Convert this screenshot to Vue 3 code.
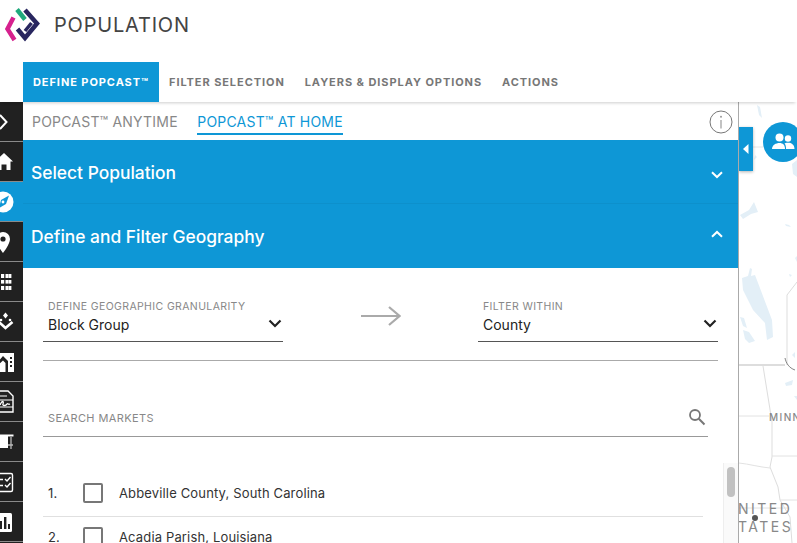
<template>
  <div class="page">
    <header class="top">
      <svg class="logo" viewBox="0 0 36 34" width="36" height="34">
        <polyline points="9.5,9.5 3.5,21 10.5,32" fill="none" stroke="#d6218e" stroke-width="4.5" />
        <polyline points="13,1.5 21,11.5" fill="none" stroke="#1fa97c" stroke-width="4.5" />
        <polyline points="21,2 33,15.5 21,30 13.5,21" fill="none" stroke="#28265f" stroke-width="4.5" />
        <polyline points="27.5,15 21,23" fill="none" stroke="#28265f" stroke-width="3.5" />
      </svg>
      <h1>POPULATION</h1>
    </header>

    <nav class="tabs">
      <a v-for="(tab, i) in tabs" :key="tab" class="tab" :class="{ active: i === 0 }">{{ tab }}</a>
    </nav>

    <div class="body">
      <aside class="rail">
        <div class="rail-item">
          <svg viewBox="0 0 23 40"><polyline points="0,13 6.5,20 0,27" fill="none" stroke="#fff" stroke-width="2" /></svg>
        </div>
        <div class="rail-item">
          <svg viewBox="0 0 23 40"><path d="M4 11 L13 19.5 L10.5 19.5 L10.5 28 L6.5 28 L6.5 22.5 L1.5 22.5 L1.5 28 L-3 28 L-3 19.5 L-5 19.5 Z" fill="#fff" /></svg>
        </div>
        <div class="rail-item active">
          <svg viewBox="0 0 23 40">
            <circle cx="3" cy="20" r="10.5" fill="#fff" />
            <path d="M9 13.5 L6 22 L-1 26 L1 18 Z" fill="#0e97d6" />
            <circle cx="3" cy="20" r="1.4" fill="#fff" />
          </svg>
        </div>
        <div class="rail-item">
          <svg viewBox="0 0 23 40">
            <path d="M3 10 a7 7 0 0 1 7 7 c0 5 -7 14 -7 14 s-7 -9 -7 -14 a7 7 0 0 1 7 -7z" fill="#fff" />
            <circle cx="3" cy="17" r="2.6" fill="#212121" />
          </svg>
        </div>
        <div class="rail-item">
          <svg viewBox="0 0 23 40" fill="#fff">
            <rect x="1" y="12" width="3.2" height="4" /><rect x="5.5" y="12" width="3.2" height="4" /><rect x="9" y="12" width="2.4" height="4" />
            <rect x="1" y="18" width="3.2" height="3.6" /><rect x="5.5" y="18" width="3.2" height="3.6" /><rect x="9" y="18" width="2.4" height="3.6" />
            <rect x="1" y="24" width="3.2" height="4" /><rect x="5.5" y="24" width="3.2" height="4" /><rect x="9" y="24" width="2.4" height="4" />
          </svg>
        </div>
        <div class="rail-item">
          <svg viewBox="0 0 23 40">
            <path d="M5.5 10.5 L8 13.5 L5.5 16.5 L3 13.5 Z" fill="#fff" />
            <circle cx="1" cy="18" r="1.3" fill="#fff" /><circle cx="10" cy="18" r="1.3" fill="#fff" />
            <polyline points="-1,20 5.5,26 12.5,20" fill="none" stroke="#fff" stroke-width="2.6" />
          </svg>
        </div>
        <div class="rail-item">
          <svg viewBox="0 0 23 40">
            <path d="M-2 11 L14 11 L14 30 L-2 30 Z" fill="#fff" />
            <path d="M-2 20 L3 14 L8 19 L8 30 L5.5 30 L5.5 21 L3 18.5 L-2 23 Z" fill="#212121" />
            <rect x="10" y="19" width="2" height="2" fill="#212121" /><rect x="10" y="23" width="2" height="2" fill="#212121" /><rect x="10" y="15" width="2" height="2" fill="#212121" />
          </svg>
        </div>
        <div class="rail-item">
          <svg viewBox="0 0 23 40">
            <path d="M-2 9 L8 9 L13 14 L13 30 L-2 30 Z" fill="none" stroke="#fff" stroke-width="1.4" />
            <path d="M0 14 L7 14 M-2 18 L13 18 M-2 25 L13 25" stroke="#fff" stroke-width="1.2" fill="none" />
            <path d="M0 23 C2 18 4 19 3 22 C2 24 6 24 7 22 C8 21 8 23 10 22" stroke="#fff" stroke-width="1.3" fill="none" />
          </svg>
        </div>
        <div class="rail-item">
          <svg viewBox="0 0 23 40">
            <rect x="-2" y="14" width="10" height="12" fill="#fff" />
            <path d="M-2 13.5 L13.5 13.5" stroke="#fff" stroke-width="2" />
            <path d="M11 15 L11 27 M8 23 L13 23" stroke="#bbb" stroke-width="1.3" fill="none" />
          </svg>
        </div>
        <div class="rail-item">
          <svg viewBox="0 0 23 40">
            <rect x="-3" y="11.5" width="15.5" height="18" rx="1.5" fill="none" stroke="#fff" stroke-width="1.4" />
            <path d="M0 17.5 L3 17.5 M0 23.5 L3 23.5" stroke="#fff" stroke-width="1.4" />
            <path d="M5 17 L7 19 L10.5 15 M5 23 L7 25 L10.5 21" stroke="#fff" stroke-width="1.4" fill="none" />
          </svg>
        </div>
        <div class="rail-item">
          <svg viewBox="0 0 23 40">
            <rect x="-4" y="11" width="16" height="19" rx="1.5" fill="#fff" />
            <rect x="4" y="15" width="2.4" height="12" fill="#212121" />
            <rect x="8" y="22" width="2" height="5" fill="#212121" />
            <rect x="0" y="19" width="2" height="8" fill="#212121" />
          </svg>
        </div>
      </aside>

      <main class="panel">
        <div class="subtabs">
          <a class="subtab">POPCAST™ ANYTIME</a>
          <a class="subtab current">POPCAST™ AT HOME</a>
          <svg class="info" viewBox="0 0 24 24" width="24" height="24">
            <circle cx="12" cy="12" r="11" fill="none" stroke="#777" stroke-width="1" />
            <circle cx="12" cy="6.8" r="1" fill="#999" />
            <path d="M12 10 L12 18.5" stroke="#999" stroke-width="1.2" />
          </svg>
        </div>

        <section class="acc">
          <span>Select Population</span>
          <svg class="acc-chev down" viewBox="0 0 12 8" width="12" height="8"><polyline points="1,1.2 6,6 11,1.2" fill="none" stroke="#fff" stroke-width="2" /></svg>
        </section>
        <section class="acc second">
          <span>Define and Filter Geography</span>
          <svg class="acc-chev up" viewBox="0 0 12 8" width="12" height="8"><polyline points="1,6.8 6,2 11,6.8" fill="none" stroke="#fff" stroke-width="2" /></svg>
        </section>

        <div class="selects">
          <div class="select">
            <label>DEFINE GEOGRAPHIC GRANULARITY</label>
            <div class="value">Block Group</div>
            <svg class="sel-chev" viewBox="0 0 14 9" width="14" height="9"><polyline points="1.5,1.5 7,7 12.5,1.5" fill="none" stroke="#222" stroke-width="2.2" /></svg>
          </div>
          <svg class="arrow" viewBox="0 0 40 24" width="40" height="24">
            <path d="M0 12 L38 12 M28 3 L38.5 12 L28 21" fill="none" stroke="#aaa" stroke-width="2.2" />
          </svg>
          <div class="select">
            <label>FILTER WITHIN</label>
            <div class="value">County</div>
            <svg class="sel-chev" viewBox="0 0 14 9" width="14" height="9"><polyline points="1.5,1.5 7,7 12.5,1.5" fill="none" stroke="#222" stroke-width="2.2" /></svg>
          </div>
        </div>

        <div class="search">
          <span>SEARCH MARKETS</span>
          <svg viewBox="0 0 18 18" width="18" height="18">
            <circle cx="7" cy="7" r="5" fill="none" stroke="#777" stroke-width="1.8" />
            <path d="M10.8 10.8 L16.5 16.5" stroke="#777" stroke-width="2" />
          </svg>
        </div>

        <ol class="markets">
          <li v-for="(m, i) in markets" :key="m">
            <span class="num">{{ i + 1 }}.</span>
            <span class="box"></span>
            <span class="name">{{ m }}</span>
          </li>
        </ol>

        <div class="scroll"><div class="thumb"></div></div>
      </main>

      <div class="map">
        <svg class="map-art" viewBox="0 0 58 441" width="58" height="441">
          <path d="M14 45 L24 45" stroke="#e6e6e6" stroke-width="1" fill="none" />
          <path d="M0 263 L46 263" stroke="#ddd" stroke-width="2" fill="none" />
          <path d="M48 193 L48 263 M48 193 L58 180" stroke="#ddd" stroke-width="1" fill="none" />
          <path d="M46 256 C47 261 50 266 56 268" stroke="#666" stroke-width="0.8" fill="none" />
          <path d="M24 264 L29 295 L33 320 L33 355 L31 365 L39 385 L41 398 L51 415 L53 441" stroke="#ddd" stroke-width="1" fill="none" />
          <path d="M0 314 L30 314 M33 354 L58 354 M0 361 C10 362 20 365 31 366 M41 398 L58 398 M0 406 L50 406" stroke="#e2e2e2" stroke-width="1" fill="none" />
          <g fill="#e3eff7">
            <path d="M3 176 L9 174 L11 166 L13 167 L12 174 L16 173 L33 218 L34 235 L28 238 L26 221 L14 208 L4 188Z" />
            <path d="M1 215 L5 216 L8 226 L4 224Z" />
            <path d="M4 228 L10 230 L16 239 L10 241 L6 237Z" />
            <path d="M18 3 L21 5 L23 16 L20 13Z" />
            <path d="M53 62 L58 58 L58 75 L54 72Z" />
            <path d="M16 53 L18 55 L15 58Z" />
            <path d="M1 113 L10 108 L15 100 L19 110 L12 112 L4 117Z" />
            <path d="M46 122 L50 123 L52 125 L47 124Z" />
            <path d="M56 156 L58 154 L58 160Z" />
            <path d="M50 172 L53 173 L51 175Z" />
            <path d="M53 253 L56 250 L56 256Z" />
            <path d="M46 281 L54 278 L53 283 L47 284Z" />
            <path d="M55 294 L58 294 L58 298Z" />
          </g>
        </svg>
        <span class="label minn">MINN</span>
        <span class="label united">NITED</span>
        <span class="label states">TATES</span>
        <i class="city"></i>
        <button class="collapse">
          <svg viewBox="0 0 6 10" width="6" height="10"><path d="M5.5 0 L0 5 L5.5 10 Z" fill="#fff" /></svg>
        </button>
        <button class="people">
          <svg viewBox="0 0 24 24" width="24" height="24" fill="#fff">
            <circle cx="8.5" cy="7.5" r="4" />
            <circle cx="17" cy="8.5" r="3.2" />
            <path d="M1 19 C1 15 5 13 8.5 13 C12 13 14 15 14 19 Z" />
            <path d="M15 19 C15 16 14.5 14.5 13.5 13.5 C15 12.8 16.5 12.8 17.5 12.8 C20 12.8 23.5 14.5 23.5 19 Z" />
          </svg>
        </button>
      </div>
    </div>
  </div>
</template>

<script setup>
const tabs = ['DEFINE POPCAST™', 'FILTER SELECTION', 'LAYERS & DISPLAY OPTIONS', 'ACTIONS']
const markets = ['Abbeville County, South Carolina', 'Acadia Parish, Louisiana']
</script>

<style>
html, body {
  margin: 0;
  overflow: hidden;
}
</style>

<style scoped>
.page {
  width: 797px;
  height: 543px;
  overflow: hidden;
  display: flex;
  flex-direction: column;
  background: #fff;
  font-family: Inter, "Liberation Sans", sans-serif;
}

.top {
  height: 62px;
  flex: none;
  display: flex;
  align-items: center;
  padding: 0 0 12px 4px;
  box-sizing: border-box;
}

.top h1 {
  margin: 0 0 0 14px;
  font-size: 20px;
  font-weight: 400;
  letter-spacing: 0.8px;
  color: #444;
}

.tabs {
  height: 40px;
  flex: none;
  display: flex;
  padding-left: 23px;
  position: relative;
  z-index: 2;
  box-shadow: 0 3px 3px -2px rgba(0, 0, 0, 0.2);
  background: #fff;
}

.tab {
  display: flex;
  align-items: center;
  padding: 0 10px;
  font-size: 11px;
  font-weight: 700;
  letter-spacing: 0.93px;
  color: #777;
}

.tab.active {
  background: #0e97d6;
  color: #fff;
}

.body {
  flex: 1;
  display: flex;
  min-height: 0;
}

.rail {
  width: 23px;
  flex: none;
  background: #212121;
}

.rail-item {
  height: 40px;
  box-sizing: border-box;
  border-bottom: 1px solid #8a8a8a;
  overflow: hidden;
}

.rail-item svg {
  display: block;
  width: 23px;
  height: 40px;
  overflow: hidden;
}

.rail-item.active {
  background: #0e97d6;
}

.panel {
  width: 716px;
  flex: none;
  box-sizing: border-box;
  border-right: 1px solid #aaa;
  position: relative;
  overflow: hidden;
}

.subtabs {
  height: 38px;
  display: flex;
  align-items: center;
  padding-left: 9px;
  gap: 19.5px;
  position: relative;
}

.subtab {
  font-size: 14px;
  letter-spacing: 0.2px;
  color: #888;
  line-height: 23px;
  position: relative;
}

.subtab.current {
  color: #0e97d6;
  border-bottom: 2px solid #0e97d6;
  top: 1px;
}

.info {
  position: absolute;
  right: 5px;
  top: 8px;
}

.acc {
  height: 64px;
  background: #0e97d6;
  color: #fff;
  font-size: 17.4px;
  font-weight: 500;
  display: flex;
  align-items: center;
  justify-content: space-between;
  padding: 1px 15px 0 8px;
  box-sizing: border-box;
  border-bottom: 1px solid #0d90cc;
}

.acc.second {
  border-bottom: 0;
}

.acc-chev.down {
  margin-top: 5px;
}

.acc-chev.up {
  margin-top: -6px;
}

.selects {
  display: grid;
  grid-template-columns: 240px 1fr 240px;
  margin: 0 20px;
  padding: 30px 0 18px;
  border-bottom: 1px solid #aaa;
  align-items: start;
}

.select {
  height: 44px;
  box-sizing: border-box;
  border-bottom: 1px solid #555;
  padding-left: 5px;
  position: relative;
}

.select label {
  display: block;
  font-size: 10.5px;
  letter-spacing: 0.38px;
  line-height: 17px;
  color: #888;
}

.value {
  font-size: 14px;
  line-height: 20px;
  color: #222;
}

.sel-chev {
  position: absolute;
  right: 1px;
  top: 21px;
}

.arrow {
  justify-self: center;
  margin-top: 6px;
}

.search {
  margin: 39px 30px 0 20px;
  height: 37px;
  box-sizing: border-box;
  border-bottom: 1px solid #999;
  padding: 0 2px 0 5px;
  display: flex;
  align-items: center;
  justify-content: space-between;
  font-size: 11px;
  letter-spacing: 0.4px;
  color: #888;
}

.search svg {
  margin-bottom: 2px;
}

.markets {
  list-style: none;
  margin: 36px 35px 0 20px;
  padding: 0;
}

.markets li {
  height: 44px;
  box-sizing: border-box;
  border-bottom: 1px solid #e0e0e0;
  display: flex;
  align-items: center;
  padding: 0 0 4px 5px;
  font-size: 13px;
  letter-spacing: 0.15px;
  color: #333;
}

.num {
  width: 35px;
}

.box {
  width: 20px;
  height: 20px;
  box-sizing: border-box;
  border: 2px solid #777;
  border-radius: 2px;
  margin-right: 16px;
}

.scroll {
  position: absolute;
  right: 0;
  top: 361px;
  bottom: 0;
  width: 15px;
  box-sizing: border-box;
  background: #fafafa;
  border-left: 1px solid #eee;
}

.thumb {
  width: 8px;
  height: 30px;
  margin: 4px 0 0 3px;
  border-radius: 4px;
  background: #c1c1c1;
}

.map {
  flex: 1;
  position: relative;
  overflow: hidden;
  background: #fff;
}

.map-art {
  position: absolute;
  left: 0;
  top: 0;
  overflow: hidden;
}

.label {
  position: absolute;
  color: #888;
  white-space: nowrap;
}

.minn {
  left: 30px;
  top: 309px;
  font-size: 10px;
  font-weight: 500;
  letter-spacing: 1.4px;
}

.united {
  left: -1px;
  top: 398px;
  font-size: 14px;
  letter-spacing: 2.5px;
}

.states {
  left: -1px;
  top: 416px;
  font-size: 14px;
  letter-spacing: 2.5px;
}

.city {
  position: absolute;
  left: 13px;
  top: 413px;
  width: 6px;
  height: 6px;
  border-radius: 50%;
  background: #555;
}

.collapse {
  position: absolute;
  left: 0;
  top: 25px;
  width: 14px;
  height: 44px;
  padding: 0;
  border: 0;
  background: #0e97d6;
  box-shadow: 0 1px 3px rgba(0, 0, 0, 0.3);
  display: flex;
  align-items: center;
  justify-content: center;
}

.people {
  position: absolute;
  left: 24px;
  top: 20px;
  width: 40px;
  height: 40px;
  padding: 0;
  border: 0;
  border-radius: 50%;
  background: #0e97d6;
  display: flex;
  align-items: center;
  justify-content: center;
}
</style>
